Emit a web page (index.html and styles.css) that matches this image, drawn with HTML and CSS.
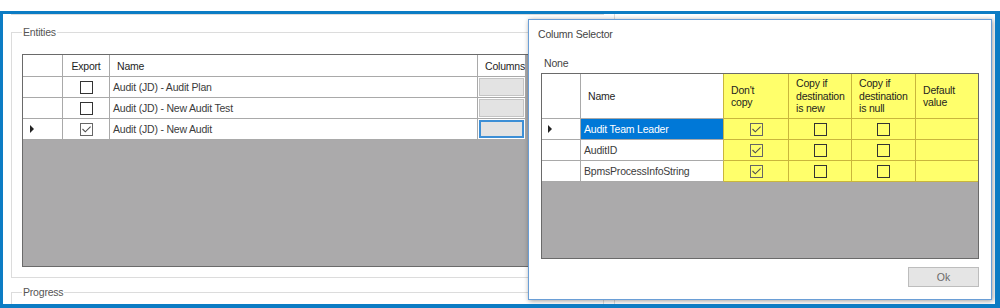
FILE: index.html
```html
<!DOCTYPE html>
<html lang="en">

<head>
    <meta charset="UTF-8">
    <title>Export - Column Selector</title>
    <link rel="stylesheet" href="styles.css">
</head>

<body>
    <div class="window">
        <div class="left-col">
            <div class="prev-group"></div>

            <fieldset class="group entities">
                <legend>Entities</legend>
                <div class="grid ent-grid">
                    <div class="row head">
                        <div class="cell rh"></div>
                        <div class="cell export center">Export</div>
                        <div class="cell name">Name</div>
                        <div class="cell cols">Columns</div>
                    </div>
                    <div class="row">
                        <div class="cell rh"></div>
                        <div class="cell export center"><span class="chk"></span></div>
                        <div class="cell name">Audit (JD) - Audit Plan</div>
                        <div class="cell cols"><span class="cell-btn"></span></div>
                    </div>
                    <div class="row">
                        <div class="cell rh"></div>
                        <div class="cell export center"><span class="chk"></span></div>
                        <div class="cell name">Audit (JD) - New Audit Test</div>
                        <div class="cell cols"><span class="cell-btn"></span></div>
                    </div>
                    <div class="row">
                        <div class="cell rh"><span class="arrow"></span></div>
                        <div class="cell export center"><span class="chk checked"></span></div>
                        <div class="cell name">Audit (JD) - New Audit</div>
                        <div class="cell cols"><span class="cell-btn focus"></span></div>
                    </div>
                </div>
            </fieldset>

            <fieldset class="group progress">
                <legend>Progress</legend>
            </fieldset>
        </div>

        <div class="right-col"></div>

        <!-- Column Selector dialog -->
        <div class="dialog">
            <div class="dialog-title">Column Selector</div>
            <div class="none-label">None</div>

            <div class="grid col-grid">
                <div class="row head">
                    <div class="cell rh"></div>
                    <div class="cell c-name">Name</div>
                    <div class="cell c-dont yellow">Don't<br>copy</div>
                    <div class="cell c-new yellow">Copy if<br>destination<br>is new</div>
                    <div class="cell c-null yellow">Copy if<br>destination<br>is null</div>
                    <div class="cell c-def yellow">Default<br>value</div>
                </div>
                <div class="row">
                    <div class="cell rh"><span class="arrow"></span></div>
                    <div class="cell c-name selected">Audit Team Leader</div>
                    <div class="cell c-dont yellow center"><span class="chk checked"></span></div>
                    <div class="cell c-new yellow center"><span class="chk"></span></div>
                    <div class="cell c-null yellow center"><span class="chk"></span></div>
                    <div class="cell c-def yellow"></div>
                </div>
                <div class="row">
                    <div class="cell rh"></div>
                    <div class="cell c-name">AuditID</div>
                    <div class="cell c-dont yellow center"><span class="chk checked"></span></div>
                    <div class="cell c-new yellow center"><span class="chk"></span></div>
                    <div class="cell c-null yellow center"><span class="chk"></span></div>
                    <div class="cell c-def yellow"></div>
                </div>
                <div class="row">
                    <div class="cell rh"></div>
                    <div class="cell c-name">BpmsProcessInfoString</div>
                    <div class="cell c-dont yellow center"><span class="chk checked"></span></div>
                    <div class="cell c-new yellow center"><span class="chk"></span></div>
                    <div class="cell c-null yellow center"><span class="chk"></span></div>
                    <div class="cell c-def yellow"></div>
                </div>
            </div>

            <div class="dialog-footer">
                <button class="ok-btn">Ok</button>
            </div>
        </div>
    </div>
</body>

</html>
```

FILE: styles.css
```css
:root {
    --frame-blue: #0c7cc4;
    --group-line: #dcdcdc;
    --grid-line: #a9a9a9;
    --grid-bg: #abaaab;
    --yellow: #ffff6b;
    --yellow-line: #c9b63c;
}

* {
    box-sizing: border-box;
}

body {
    margin: 0;
    width: 1000px;
    height: 308px;
    padding-top: 11px;
    overflow: hidden;
    background-color: #fff;
    font-family: "Liberation Sans", Arial, sans-serif;
    font-size: 10.5px;
    letter-spacing: -0.2px;
    color: #3c3c3c;
}

.window {
    position: relative;
    display: flex;
    height: 297px;
    border: solid var(--frame-blue);
    border-width: 3px 5px 4px 3px;
    background-color: #fff;
    overflow: hidden;
}

.left-col {
    display: flex;
    flex-direction: column;
    flex-shrink: 0;
    width: 593px;
    margin-left: 8px;
}

.right-col {
    flex: 1;
    margin-left: 10px;
    border-left: 1px solid var(--group-line);
}

.prev-group {
    height: 4px;
    border: 1px solid var(--group-line);
    border-top: 0;
}

/* group boxes */
.group {
    margin: 10px 0 0;
    padding: 15px 10px 10px;
    border: 1px solid var(--group-line);
    min-width: 0;
}

.group legend {
    padding: 0 1px;
    line-height: 14px;
    color: #555;
}

.progress {
    height: 40px;
    margin-top: 7px;
    flex-shrink: 0;
}

/* data grids */
.grid {
    border: 1px solid #6a6a6a;
    background-color: var(--grid-bg);
    overflow: hidden;
}

.ent-grid {
    height: 213px;
}

.row {
    display: flex;
    height: 21px;
}

.row.head {
    height: 22px;
    color: #1e1e1e;
}

.cell {
    display: flex;
    align-items: center;
    flex-shrink: 0;
    padding-left: 3px;
    background-color: #fff;
    border-right: 1px solid var(--grid-line);
    border-bottom: 1px solid var(--grid-line);
    white-space: nowrap;
    overflow: hidden;
}

.head .cell {
    padding-left: 7px;
}

.cell.center,
.head .cell.center {
    justify-content: center;
    padding-left: 0;
}

.ent-grid .rh {
    width: 40px;
    padding-left: 7px;
}

.ent-grid .export {
    width: 47px;
}

.ent-grid .name {
    width: 368px;
}

.ent-grid .cols {
    width: 48px;
    padding: 1px;
}

.ent-grid .head .cols {
    padding-left: 7px;
}

.cell-btn {
    display: block;
    width: 100%;
    height: 100%;
    background-color: #e3e3e3;
    border: 1px solid #c4c4c4;
}

.cell-btn.focus {
    border: 2px solid #3d8fd6;
}

.arrow {
    width: 0;
    height: 0;
    border-left: 4px solid #222;
    border-top: 4px solid transparent;
    border-bottom: 4px solid transparent;
}

.chk {
    display: block;
    width: 13px;
    height: 13px;
    border: 1px solid #333;
}

.chk.checked {
    border-color: #666;
    background: url("data:image/svg+xml,%3Csvg xmlns='http://www.w3.org/2000/svg' viewBox='0 0 11 11'%3E%3Cpath d='M1.5 5l2.8 2.8L9.6 2.6' fill='none' stroke='%23505050' stroke-width='1.1'/%3E%3C/svg%3E") center / 11px 11px no-repeat;
}

/* column selector dialog */
.dialog {
    position: absolute;
    left: 525px;
    top: 5px;
    width: 464px;
    height: 281px;
    background-color: #fff;
    border: 1px solid #6a9ed6;
    box-shadow: 1px 1px 5px rgba(0, 0, 0, 0.4);
}

.dialog-title {
    height: 30px;
    padding-left: 9px;
    line-height: 28px;
    color: #444;
}

.none-label {
    margin-top: 6px;
    padding-left: 15px;
    line-height: 14px;
    color: #444;
}

.col-grid {
    width: 438px;
    height: 186px;
    margin: 3px 0 0 12px;
}

.col-grid .row.head {
    height: 45px;
    line-height: 12.5px;
}

.col-grid .rh {
    width: 39px;
    padding-left: 6px;
}

.col-grid .c-name {
    width: 143px;
    border-right-color: var(--yellow-line);
}

.col-grid .c-dont {
    width: 65px;
}

.col-grid .c-new {
    width: 63px;
}

.col-grid .c-null {
    width: 64px;
}

.col-grid .c-def {
    width: 63px;
}

.cell.yellow {
    background-color: var(--yellow);
    border-color: var(--yellow-line);
}

.cell.selected {
    background-color: #0078d7;
    color: #fff;
}

.dialog-footer {
    display: flex;
    justify-content: flex-end;
    padding: 8px 12px 0 0;
}

.ok-btn {
    width: 71px;
    height: 20px;
    padding: 0;
    background-color: #e5e5e5;
    border: 1px solid #bdbdbd;
    font-family: inherit;
    font-size: 10.5px;
    color: #6a6a6a;
}
```
